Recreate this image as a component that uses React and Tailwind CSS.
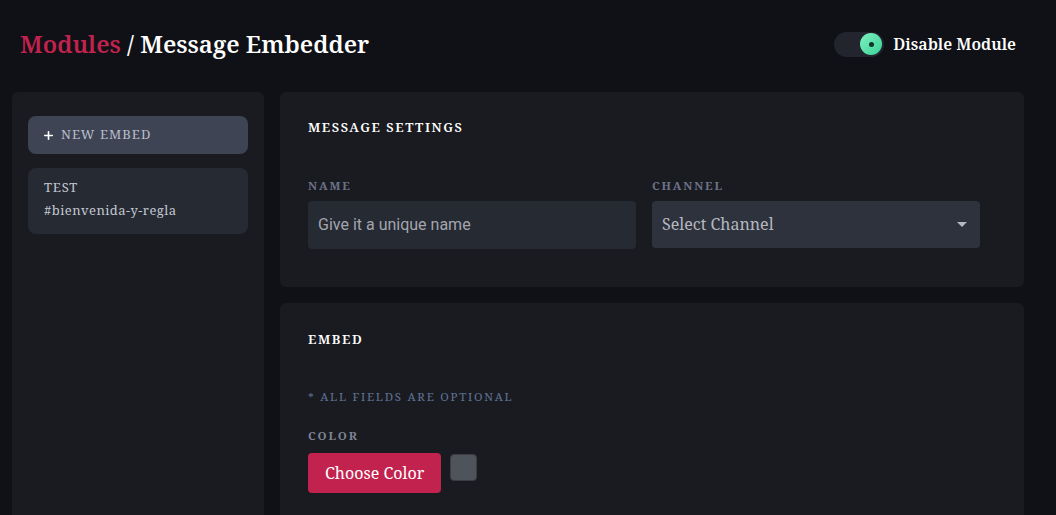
import { Plus } from "lucide-react";

const serif = { fontFamily: '"Noto Serif", "DejaVu Serif Condensed", "Liberation Serif", serif' };

export default function App() {
  return (
    <div
      className="min-h-screen bg-[#101116] text-white overflow-hidden"
      style={serif}
    >
      {/* Header */}
      <header className="h-[92px] flex items-center justify-between pl-5 pr-10 pb-1">
        <h1 className="text-[24px] font-semibold">
          <span className="text-[#c2224e]">Modules</span>
          <span className="text-white"> / Message Embedder</span>
        </h1>
        <div className="flex items-center gap-[9px]">
          <div className="w-[50px] h-[25px] rounded-full bg-[#22252d] flex items-center justify-end pr-[2px]">
            <div className="w-[22px] h-[22px] rounded-full bg-gradient-to-br from-[#7cf0c0] to-[#34d399] flex items-center justify-center">
              <div className="w-[5px] h-[5px] rounded-full bg-[#123327]" />
            </div>
          </div>
          <span className="text-[16px] font-semibold">Disable Module</span>
        </div>
      </header>

      <div className="flex gap-4 px-3">
        {/* Sidebar */}
        <aside className="w-[252px] h-[440px] bg-[#1a1b20] rounded-md p-4 pt-6 flex flex-col gap-[14px]">
          <button className="h-[38px] rounded-lg bg-[#3e4454] flex items-center gap-[6px] pl-[14px] text-[13px] tracking-[0.08em] text-[#b9bdc9]">
            <Plus size={13} strokeWidth={3} className="text-white" />
            NEW EMBED
          </button>
          <div className="h-[66px] rounded-lg bg-[#262a33] px-4 pt-[10px] text-[13px] text-[#c3c7d1] tracking-[0.035em]">
            <div className="tracking-[0.06em]">TEST</div>
            <div className="mt-[3px]">#bienvenida-y-regla</div>
          </div>
        </aside>

        {/* Main */}
        <main className="w-[744px] flex flex-col gap-4">
          <section className="h-[195px] bg-[#1a1b20] rounded-md px-7 pt-[26px]">
            <h2 className="text-[13px] font-semibold tracking-[0.12em]">MESSAGE SETTINGS</h2>
            <div className="flex gap-4 mt-[39px]">
              <div className="w-[328px]">
                <label className="block text-[11.5px] font-bold tracking-[0.16em] text-[#6b7389]">NAME</label>
                <input
                  placeholder="Give it a unique name"
                  className="mt-[7px] w-full h-[48px] rounded bg-[#262a33] px-[10px] text-[16px] text-white placeholder-[#a2a6ae] outline-none"
                  style={{ fontFamily: 'Roboto, "Liberation Sans", sans-serif' }}
                />
              </div>
              <div className="w-[328px]">
                <label className="block text-[11.5px] font-bold tracking-[0.16em] text-[#6b7389]">CHANNEL</label>
                <div className="mt-[7px] w-full h-[47px] rounded bg-[#2e323d] pl-[10px] pr-[13px] flex items-center justify-between text-[16px] text-[#b5b8bf]">
                  <span>Select Channel</span>
                  <svg width="10" height="5" viewBox="0 0 10 5">
                    <path d="M0 0 L10 0 L5 5 Z" fill="#b5b8bf" />
                  </svg>
                </div>
              </div>
            </div>
          </section>

          <section className="h-[230px] bg-[#1a1b20] rounded-md px-7 pt-[27px]">
            <h2 className="text-[13px] font-semibold tracking-[0.12em]">EMBED</h2>
            <p className="mt-[38px] text-[11.5px] tracking-[0.15em] text-[#5f7396]">* ALL FIELDS ARE OPTIONAL</p>
            <label className="block mt-[22px] text-[11.5px] font-bold tracking-[0.16em] text-[#7d8496]">COLOR</label>
            <div className="flex items-start gap-[9px] mt-[9px]">
              <button className="h-[40px] px-[17px] rounded bg-[#c2224e] text-[16px] text-white">
                Choose Color
              </button>
              <div className="w-[27px] h-[27px] mt-[1px] rounded bg-[#4f535c] border border-[#3a3d44]" />
            </div>
          </section>
        </main>
      </div>
    </div>
  );
}
